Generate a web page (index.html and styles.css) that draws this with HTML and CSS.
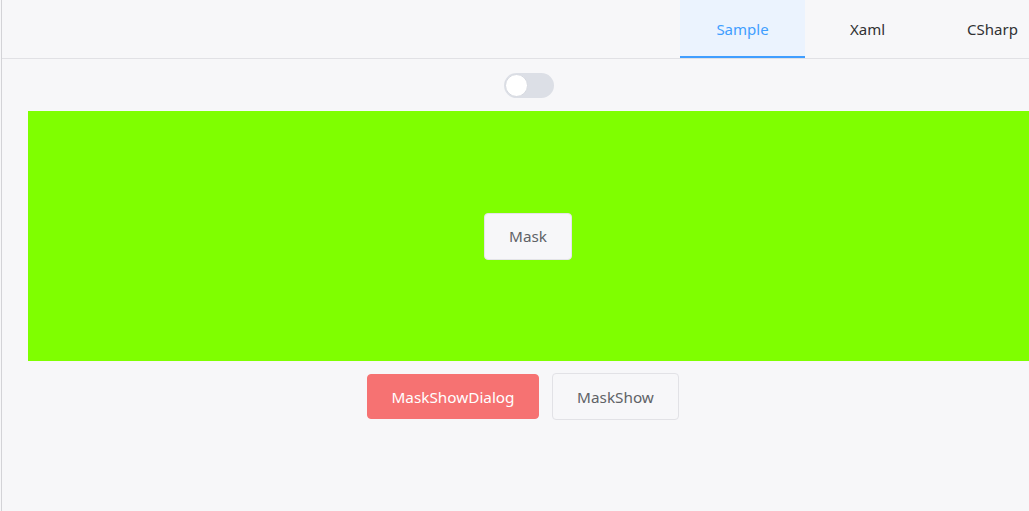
FILE: index.html
```html
<!DOCTYPE html>
<html>
<head>
<meta charset="utf-8">
<link rel="stylesheet" href="styles.css">
</head>
<body>
<div class="page">
  <header class="header">
    <div class="tab active">Sample</div>
    <div class="tab">Xaml</div>
    <div class="tab">CSharp</div>
  </header>
  <main class="main">
    <div class="toggle"><span class="knob"></span></div>
    <div class="mask-area">
      <button class="btn">Mask</button>
    </div>
    <div class="actions">
      <button class="btn btn-danger">MaskShowDialog</button>
      <button class="btn btn-plain">MaskShow</button>
    </div>
  </main>
</div>
</body>
</html>
```
FILE: styles.css
```css
html, body {
  margin: 0;
  padding: 0;
  background: #f7f7f9;
  font-family: "Noto Sans", "Open Sans", "Liberation Sans", sans-serif;
  overflow: hidden;
}
.page {
  margin-left: 1px;
  border-left: 1px solid #d3d3d7;
  height: 511px;
  width: 1028px;
  overflow: hidden;
  box-sizing: border-box;
}
.header {
  display: flex;
  height: 58px;
  border-bottom: 1px solid #e1e1e5;
  padding-left: 678px;
  box-sizing: content-box;
}
.tab {
  flex: 0 0 125px;
  height: 58px;
  box-sizing: border-box;
  display: flex;
  align-items: center;
  justify-content: center;
  font-size: 15px;
  color: #303133;
  border-bottom: 2px solid transparent;
  padding-top: 2px;
}
.tab.active {
  background: #ebf3fe;
  color: #409eff;
  border-bottom-color: #409eff;
}
.main {
  width: 1002px;
  margin-left: 26px;
  padding-top: 14px;
  display: flex;
  flex-direction: column;
  align-items: center;
}
.toggle {
  width: 50px;
  height: 25px;
  border-radius: 13px;
  background: #dcdfe6;
  box-sizing: border-box;
  padding: 1px;
  display: flex;
  align-items: center;
}
.knob {
  width: 23px;
  height: 23px;
  border-radius: 50%;
  background: #fff;
  box-sizing: border-box;
  border: 1px solid #d6d9e0;
}
.mask-area {
  margin-top: 13px;
  width: 100%;
  height: 250px;
  background: #7fff00;
  display: flex;
  align-items: center;
  justify-content: center;
}
.btn {
  font-family: inherit;
  font-size: 15.3px;
  border-radius: 4px;
  box-sizing: border-box;
  cursor: pointer;
  padding: 0;
}
.mask-area .btn {
  width: 88px;
  height: 47px;
  background: #f7f7f9;
  border: 1px solid #e4e4e8;
  color: #606266;
  margin-right: 2px;
}
.actions {
  margin-top: 12px;
  display: flex;
  gap: 13px;
  align-items: center;
  padding-right: 12px;
}
.btn-danger {
  width: 172px;
  height: 45px;
  background: #f67272;
  border: 1px solid #f67272;
  color: #fff;
}
.btn-plain {
  width: 127px;
  height: 47px;
  background: #f7f7f9;
  border: 1px solid #e2e2e6;
  color: #606266;
}
```
